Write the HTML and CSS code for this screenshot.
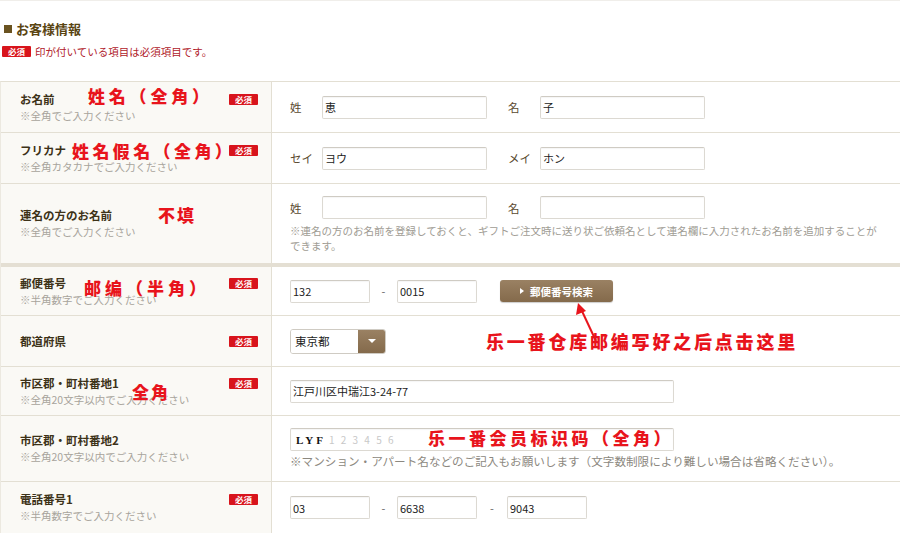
FILE: index.html
```html
<!DOCTYPE html>
<html lang="ja">
<head>
<meta charset="utf-8">
<title>お客様情報</title>
<link rel="stylesheet" href="styles.css">
</head>
<body>
<div class="page">
  <div class="topline"></div>
  <h2 class="title"><span class="sq"></span>お客様情報</h2>
  <p class="req-note"><span class="badge">必須</span>印が付いている項目は必須項目です。</p>

  <div class="form">
    <div class="row r1">
      <div class="lcell">
        <div class="ltext"><div class="lname">お名前</div><div class="lsub">※全角でご入力ください</div></div>
        <span class="badge">必須</span>
      </div>
      <div class="rcell">
        <div class="pair"><span class="plabel">姓</span><span class="inp w164">恵</span><span class="plabel gapl">名</span><span class="inp w164">子</span></div>
      </div>
    </div>

    <div class="row r2">
      <div class="lcell">
        <div class="ltext"><div class="lname">フリカナ</div><div class="lsub">※全角カタカナでご入力ください</div></div>
        <span class="badge">必須</span>
      </div>
      <div class="rcell">
        <div class="pair"><span class="plabel">セイ</span><span class="inp w164">ヨウ</span><span class="plabel gapl">メイ</span><span class="inp w164">ホン</span></div>
      </div>
    </div>

    <div class="row r3">
      <div class="lcell">
        <div class="ltext"><div class="lname">連名の方のお名前</div><div class="lsub">※全角でご入力ください</div></div>
      </div>
      <div class="rcell">
        <div class="pair"><span class="plabel">姓</span><span class="inp w164"></span><span class="plabel gapl">名</span><span class="inp w164"></span></div>
        <p class="rnote">※連名の方のお名前を登録しておくと、ギフトご注文時に送り状ご依頼名として連名欄に入力されたお名前を追加することができます。</p>
      </div>
    </div>

    <div class="row r4">
      <div class="lcell">
        <div class="ltext"><div class="lname">郵便番号</div><div class="lsub">※半角数字でご入力ください</div></div>
        <span class="badge">必須</span>
      </div>
      <div class="rcell">
        <div class="pair"><span class="inp w79">132</span><span class="dash">-</span><span class="inp w79">0015</span><span class="btn"><span class="tri"></span>郵便番号検索</span></div>
      </div>
    </div>

    <div class="row r5">
      <div class="lcell">
        <div class="ltext"><div class="lname">都道府県</div></div>
        <span class="badge">必須</span>
      </div>
      <div class="rcell">
        <div class="select"><span class="sval">東京都</span><span class="sbtn"><span class="dtri"></span></span></div>
      </div>
    </div>

    <div class="row r6">
      <div class="lcell">
        <div class="ltext"><div class="lname">市区郡・町村番地1</div><div class="lsub">※全角20文字以内でご入力ください</div></div>
        <span class="badge">必須</span>
      </div>
      <div class="rcell">
        <span class="inp w383">江戸川区中瑞江3-24-77</span>
      </div>
    </div>

    <div class="row r7">
      <div class="lcell">
        <div class="ltext"><div class="lname">市区郡・町村番地2</div><div class="lsub">※全角20文字以内でご入力ください</div></div>
      </div>
      <div class="rcell">
        <span class="inp w383"><b class="lyf">LYF</b><span class="blur">1 2 3 4 5 6</span></span>
        <p class="rnote2">※マンション・アパート名などのご記入もお願いします（文字数制限により難しい場合は省略ください）。</p>
      </div>
    </div>

    <div class="row r8">
      <div class="lcell">
        <div class="ltext"><div class="lname">電話番号1</div><div class="lsub">※半角数字でご入力ください</div></div>
        <span class="badge">必須</span>
      </div>
      <div class="rcell">
        <div class="pair"><span class="inp w79">03</span><span class="dash">-</span><span class="inp w79">6638</span><span class="dash dash2">-</span><span class="inp w79">9043</span></div>
      </div>
    </div>
  </div>

  <span class="anno a1">姓名（全角）</span>
  <span class="anno a2">姓名假名（全角）</span>
  <span class="anno a3">不填</span>
  <span class="anno a4">邮编（半角）</span>
  <span class="anno a5">乐一番仓库邮编写好之后点击这里</span>
  <span class="anno a6">全角</span>
  <span class="anno a7">乐一番会员标识码（全角）</span>
  <svg class="arrow" width="30" height="40" viewBox="0 0 30 40">
    <line x1="24" y1="38" x2="9" y2="6" stroke="#e8141c" stroke-width="2"/>
    <polygon points="6,0 4,12 14,8" fill="#e8141c"/>
  </svg>
</div>
</body>
</html>
```

FILE: styles.css
```css
* { box-sizing: border-box; }
html, body { margin: 0; padding: 0; background: #fff; }
body {
  font-family: "Noto Sans CJK JP", "Noto Sans", sans-serif;
  color: #3a3020;
  width: 900px;
  height: 533px;
  overflow: hidden;
}
.page { position: relative; width: 900px; }
.topline { height: 3px; border-top: 1px solid #f0eeea; }
.title {
  margin: 17px 0 0 4px;
  font-size: 13px;
  line-height: 18px;
  font-weight: bold;
  color: #5a4512;
  display: flex;
  align-items: center;
}
.sq { width: 8px; height: 8px; background: #6a5320; margin-right: 4px; }
.req-note {
  margin: 7px 0 0 2px;
  font-size: 10.5px;
  line-height: 13px;
  color: #b0202a;
  display: flex;
  align-items: center;
}
.req-note .badge { margin-right: 4px; }
.badge {
  display: inline-block;
  background: #d8141c;
  color: #fff;
  font-size: 8.5px;
  font-weight: bold;
  line-height: 11px;
  height: 11px;
  width: 29px;
  text-align: center;
  border-radius: 1px;
  flex: none;
}
.form {
  margin-top: 23px;
  border-top: 1px solid #e3dfd3;
  border-left: 1px solid #ece9e0;
}
.row { display: flex; border-bottom: 1px solid #e3dfd3; }
.r1, .r2, .r5 { min-height: 51px; }
.r3 { min-height: 83px; border-bottom: 4px solid #e4dfd3; }
.r4, .r6 { min-height: 49px; }
.r7 { min-height: 66px; }
.r8 { min-height: 52px; }
.lcell {
  width: 271px;
  flex: none;
  background: #faf9f5;
  border-right: 1px solid #e3dfd3;
  display: flex;
  align-items: center;
  padding: 0 13px 0 19px;
}
.ltext { flex: 1; }
.lcell .badge { align-self: center; margin-top: -16px; }
.r5 .lcell .badge { margin-top: 0; }
.lname { font-size: 11.5px; font-weight: bold; line-height: 17px; color: #3d3218; }
.lsub { font-size: 10.5px; line-height: 16px; color: #a8a49c; }
.rcell {
  flex: 1;
  padding: 0 15px 0 18px;
  display: flex;
  flex-direction: column;
  justify-content: center;
}
.r3 .rcell { justify-content: flex-start; padding-top: 12px; }
.r7 .rcell { justify-content: flex-start; padding-top: 12px; }
.pair { display: flex; align-items: center; }
.plabel { width: 32px; font-size: 11.5px; color: #5a4a30; flex: none; }
.gapl { margin-left: 21px; }
.inp {
  display: inline-flex;
  align-items: center;
  height: 23px;
  border: 1px solid #dcd9d2;
  border-top-color: #cfcbc3;
  border-radius: 2px;
  background: #fff;
  box-shadow: inset 0 1px 1px rgba(0,0,0,0.04);
  font-size: 11px;
  color: #222;
  padding-left: 2px;
  flex: none;
  white-space: nowrap;
  overflow: hidden;
}
.w164 { width: 165px; }
.w79 { width: 80px; }
.w383 { width: 384px; }
.dash { width: 27px; text-align: center; font-size: 11px; color: #666; flex: none; }
.dash2 { width: 30px; }
.btn {
  margin-left: 23px;
  width: 113px;
  height: 22px;
  border-radius: 3px;
  background: linear-gradient(#9a8163, #846a4b);
  color: #fff;
  font-size: 10.5px;
  font-weight: bold;
  display: inline-flex;
  align-items: center;
  justify-content: center;
  box-shadow: 0 1px 1px rgba(0,0,0,0.2);
}
.tri {
  width: 0; height: 0;
  border-left: 4px solid #fff;
  border-top: 3.5px solid transparent;
  border-bottom: 3.5px solid transparent;
  margin-right: 6px;
}
.select {
  display: flex;
  width: 96px;
  height: 25px;
  border: 1px solid #cfcbc3;
  border-radius: 3px;
  overflow: hidden;
}
.sval { flex: 1; font-size: 11.5px; color: #222; display: flex; align-items: center; padding-left: 4px; background: #fff; }
.sbtn { width: 27px; background: linear-gradient(#9a8163, #846a4b); display: flex; align-items: center; justify-content: center; }
.dtri { width: 0; height: 0; border-top: 4px solid #fff; border-left: 4px solid transparent; border-right: 4px solid transparent; }
.rnote { margin: 4px 0 0; font-size: 10.5px; line-height: 15px; color: #a09c94; }
.rnote2 { margin: 3px 0 0; font-size: 11.6px; line-height: 15px; color: #8c8880; white-space: nowrap; }
.lyf { font-family: "Liberation Serif", serif; font-size: 11px; letter-spacing: 3px; color: #111; margin-left: 3px; }
.blur { color: #c8c8c8; font-size: 10px; letter-spacing: 2px; margin-left: 3px; }
.anno {
  position: absolute;
  font-family: "Noto Sans CJK SC", sans-serif;
  font-weight: 900;
  font-size: 17px;
  line-height: 20px;
  letter-spacing: 2px;
  color: #e8141c;
  white-space: nowrap;
}
.a1 { left: 88px; top: 86px; letter-spacing: 3.8px; }
.a2 { left: 72px; top: 141px; letter-spacing: 3.4px; }
.a3 { left: 158px; top: 205px; }
.a4 { left: 84px; top: 278px; letter-spacing: 4px; }
.a5 { left: 486px; top: 331px; font-size: 18px; letter-spacing: 2.8px; }
.a6 { left: 132px; top: 382px; }
.a7 { left: 428px; top: 428px; letter-spacing: 3.5px; }
.arrow { position: absolute; left: 572px; top: 303px; }
```
